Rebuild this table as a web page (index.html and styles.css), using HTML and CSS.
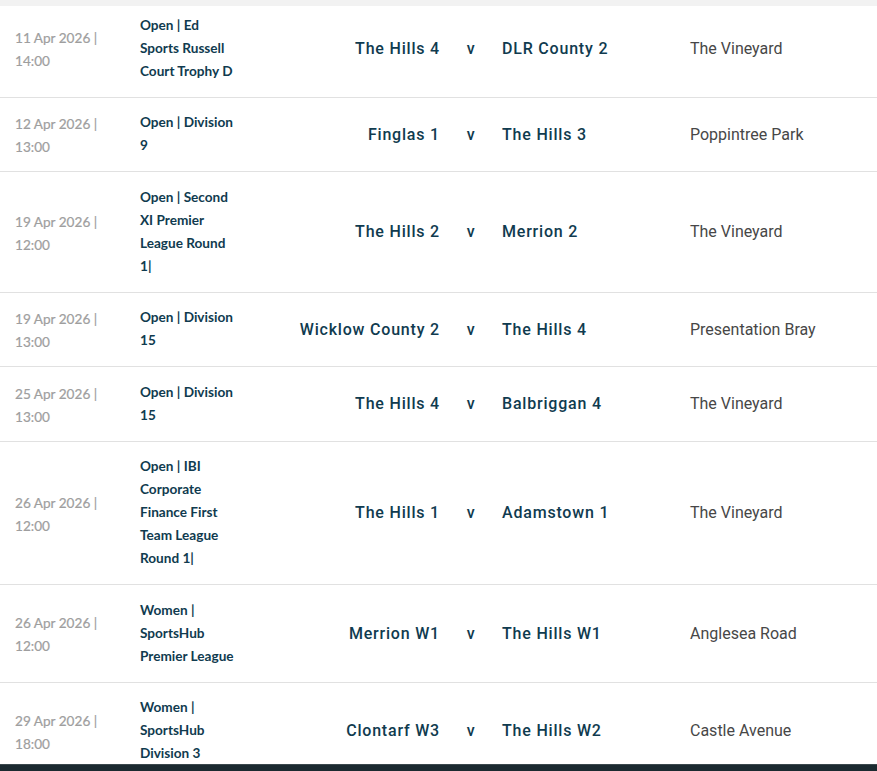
FILE: index.html
```html
<!DOCTYPE html>
<html lang="en">
<head>
<meta charset="utf-8">
<title>Fixtures</title>
<link rel="stylesheet" href="styles.css">
</head>
<body>
<div class="topbar"></div>
<div class="fixtures">
  <div class="row">
    <div class="date">11 Apr 2026 |<br>14:00</div>
    <div class="comp">Open | Ed Sports Russell Court Trophy D</div>
    <div class="home">The Hills 4</div>
    <div class="vs">v</div>
    <div class="away">DLR County 2</div>
    <div class="venue">The Vineyard</div>
  </div>
  <div class="row">
    <div class="date">12 Apr 2026 |<br>13:00</div>
    <div class="comp">Open | Division 9</div>
    <div class="home">Finglas 1</div>
    <div class="vs">v</div>
    <div class="away">The Hills 3</div>
    <div class="venue">Poppintree Park</div>
  </div>
  <div class="row">
    <div class="date">19 Apr 2026 |<br>12:00</div>
    <div class="comp">Open | Second XI Premier League Round 1|</div>
    <div class="home">The Hills 2</div>
    <div class="vs">v</div>
    <div class="away">Merrion 2</div>
    <div class="venue">The Vineyard</div>
  </div>
  <div class="row">
    <div class="date">19 Apr 2026 |<br>13:00</div>
    <div class="comp">Open | Division 15</div>
    <div class="home">Wicklow County 2</div>
    <div class="vs">v</div>
    <div class="away">The Hills 4</div>
    <div class="venue">Presentation Bray</div>
  </div>
  <div class="row">
    <div class="date">25 Apr 2026 |<br>13:00</div>
    <div class="comp">Open | Division 15</div>
    <div class="home">The Hills 4</div>
    <div class="vs">v</div>
    <div class="away">Balbriggan 4</div>
    <div class="venue">The Vineyard</div>
  </div>
  <div class="row">
    <div class="date">26 Apr 2026 |<br>12:00</div>
    <div class="comp">Open | IBI Corporate Finance First Team League Round 1|</div>
    <div class="home">The Hills 1</div>
    <div class="vs">v</div>
    <div class="away">Adamstown 1</div>
    <div class="venue">The Vineyard</div>
  </div>
  <div class="row">
    <div class="date">26 Apr 2026 |<br>12:00</div>
    <div class="comp">Women | SportsHub Premier League</div>
    <div class="home">Merrion W1</div>
    <div class="vs">v</div>
    <div class="away">The Hills W1</div>
    <div class="venue">Anglesea Road</div>
  </div>
  <div class="row">
    <div class="date">29 Apr 2026 |<br>18:00</div>
    <div class="comp">Women | SportsHub Division 3</div>
    <div class="home">Clontarf W3</div>
    <div class="vs">v</div>
    <div class="away">The Hills W2</div>
    <div class="venue">Castle Avenue</div>
  </div>
</div>
<div class="bottombar"></div>
</body>
</html>
```

FILE: styles.css
```css
html, body {
  margin: 0;
  padding: 0;
  overflow: hidden;
  background: #ffffff;
}

body {
  position: relative;
  font-family: "Lato", "Roboto", sans-serif;
}

.topbar {
  position: absolute;
  top: 0;
  left: 0;
  right: 0;
  height: 6px;
  background: #f2f2f2;
  z-index: 2;
}

.fixtures {
  display: flex;
  flex-direction: column;
}

.row {
  display: grid;
  grid-template-columns: 140px 100px 200px 62px 188px 1fr;
  align-items: center;
  padding: 13.5px 0 14px;
  border-bottom: 1px solid #e1e1e1;
}

.date {
  padding-left: 15px;
  margin: 2px 0 -2px;
  font-family: "Lato", sans-serif;
  font-size: 13.6px;
  line-height: 23px;
  color: #9e9e9e;
  -webkit-text-stroke: 0.2px #9e9e9e;
}

.comp {
  font-family: "Lato", sans-serif;
  font-weight: 700;
  font-size: 13.6px;
  line-height: 23px;
  color: #103b4f;
}

.home,
.away,
.vs {
  font-family: "Roboto", sans-serif;
  font-weight: 500;
  font-size: 16px;
  letter-spacing: 0.8px;
  color: #103b4f;
  line-height: 23px;
}

.home {
  text-align: right;
}

.vs {
  text-align: center;
}

.venue {
  font-family: "Roboto", sans-serif;
  font-size: 16px;
  line-height: 23px;
  color: #474747;
}

.bottombar {
  position: fixed;
  left: 0;
  right: 0;
  bottom: 0;
  height: 6px;
  background: #1b2a30;
  border-top: 1px solid #3b484d;
  z-index: 2;
}
```
